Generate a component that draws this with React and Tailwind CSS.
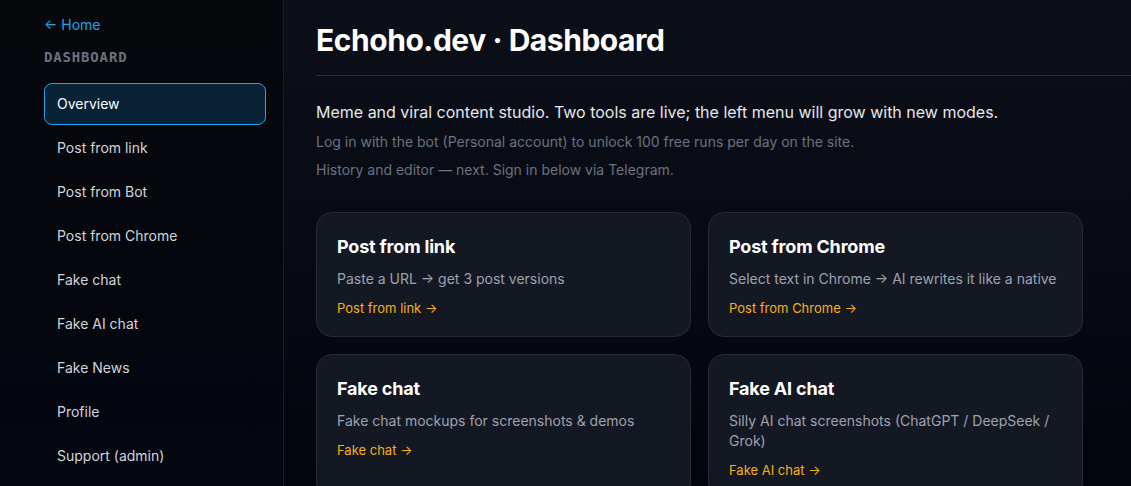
const nav = [
  'Overview',
  'Post from link',
  'Post from Bot',
  'Post from Chrome',
  'Fake chat',
  'Fake AI chat',
  'Fake News',
  'Profile',
  'Support (admin)',
];

const cards = [
  { title: 'Post from link', desc: 'Paste a URL → get 3 post versions', link: 'Post from link →' },
  { title: 'Post from Chrome', desc: 'Select text in Chrome → AI rewrites it like a native', link: 'Post from Chrome →' },
  { title: 'Fake chat', desc: 'Fake chat mockups for screenshots & demos', link: 'Fake chat →' },
  { title: 'Fake AI chat', desc: 'Silly AI chat screenshots (ChatGPT / DeepSeek / Grok)', link: 'Fake AI chat →' },
];

export default function App() {
  return (
    <div className="flex h-[486px] overflow-hidden bg-[#07090f] font-['Inter',sans-serif]">
      <aside className="w-[284px] shrink-0 border-r border-[#1b1e26] bg-gradient-to-b from-[#07080c] to-[#040610] pl-[44px] pr-[17px] pt-[15px]">
        <a className="block text-sm leading-5 text-[#1ea5e9]">← Home</a>
        <p className="mt-[12px] font-['DejaVu_Sans_Mono',monospace] text-[14px] font-bold leading-5 tracking-[0.06em] text-[#6b7280]">
          DASHBOARD
        </p>
        <nav className="mt-4 flex flex-col gap-[2px]">
          {nav.map((item, i) => (
            <a
              key={item}
              className={
                i === 0
                  ? 'flex h-[42px] items-center rounded-lg border border-[#1ea5e9] bg-[#0a2235] pl-3 text-sm text-white'
                  : 'flex h-[42px] items-center rounded-lg border border-transparent pl-3 text-sm text-[#d1d5db]'
              }
            >
              {item}
            </a>
          ))}
        </nav>
      </aside>

      <main className="flex-1 bg-gradient-to-b from-[#0c0f17] via-[#080b14] to-[#03050c] pl-8 pt-5">
        <h1 className="border-b border-[#2a2d36] pb-[15px] text-[30px] font-bold leading-10 tracking-[-0.015em] text-white">
          Echoho.dev · Dashboard
        </h1>
        <p className="mt-[24px] text-base leading-6 text-[#e5e7eb]">
          Meme and viral content studio. Two tools are live; the left menu will grow with new modes.
        </p>
        <p className="mt-2 text-sm leading-5 text-[#6b7280]">
          Log in with the bot (Personal account) to unlock 100 free runs per day on the site.
        </p>
        <p className="mt-2 text-sm leading-5 text-[#6b7280]">
          History and editor — next. Sign in below via Telegram.
        </p>

        <div className="mt-8 grid w-[767px] grid-cols-2 gap-[17px]">
          {cards.map((c) => (
            <div
              key={c.title}
              className="rounded-2xl border border-[#272b35] bg-[#141823] px-5 pb-[19px] pt-[22px]"
            >
              <h2 className="text-lg font-bold leading-6 tracking-[-0.01em] text-white">{c.title}</h2>
              <p className="mt-[10px] text-sm leading-5 text-[#9ca3af]">{c.desc}</p>
              <a className="mt-[10px] block text-[13px] leading-[18px] text-[#f5b01a]">{c.link}</a>
            </div>
          ))}
        </div>
      </main>
    </div>
  );
}
